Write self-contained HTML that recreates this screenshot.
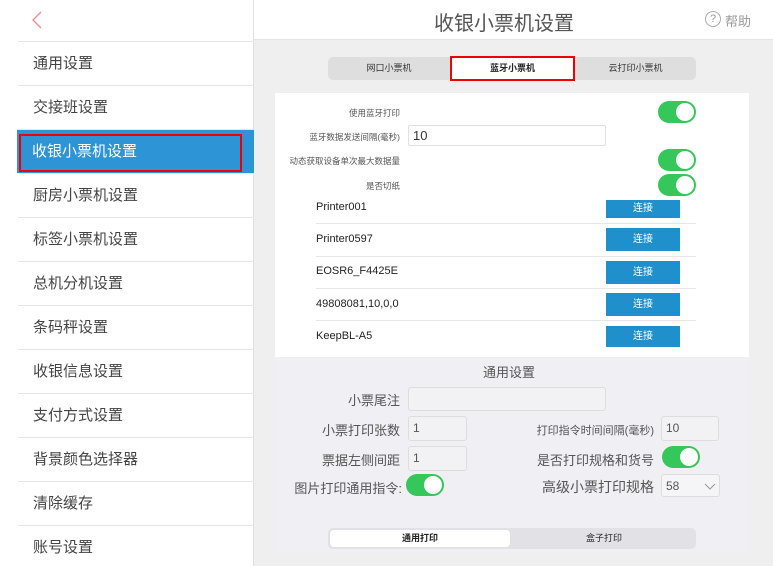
<!DOCTYPE html>
<html><head><meta charset="utf-8"><style>
*{margin:0;padding:0;box-sizing:border-box}
body{width:773px;height:566px;overflow:hidden;background:#fff;font-family:"Liberation Sans","Noto Sans CJK SC",sans-serif;position:relative;color:#333}
.a{position:absolute}
.side{left:0;top:0;width:254px;height:566px;background:#fff;border-right:1px solid #e0e0e0}
.item{position:absolute;left:18px;width:236px;height:44px;border-top:1px solid #e6e6e6;font-size:15px;color:#444;padding-left:15px;line-height:44px}
.sel{background:#2d94d6;color:#fff;left:17px;width:242px}
.main{left:254px;top:40px;width:519px;height:526px;background:#efefef}
.tog{position:absolute;width:38px;height:22px;border-radius:11px;background:#35c759}
.tog::after{content:"";position:absolute;right:2px;top:2px;width:18px;height:18px;border-radius:50%;background:#fff}
.lbl{position:absolute;font-size:8.5px;color:#555;text-align:right}
.inp{position:absolute;border:1px solid #e0e0e0;background:#fff;border-radius:2px}
.btn{position:absolute;left:606px;width:74px;height:23px;background:#1f90cc;color:#fff;font-size:10px;text-align:center;line-height:23px}
.pn{position:absolute;left:316px;font-size:11px;color:#222}
.ln{position:absolute;left:316px;width:380px;border-top:1px solid #e6e6e6}
.gl{position:absolute;font-size:13px;color:#555;text-align:right}
.gi{position:absolute;border:1px solid #ddd;border-radius:3px;background:#f2f2f5;font-size:12px;color:#555;padding-left:4px;line-height:22px}
</style></head><body>
<div class="a side">
<svg class="a" style="left:31px;top:11px" width="12" height="18"><path d="M10 1 L2 9 L10 17" stroke="#f08a8a" stroke-width="1.3" fill="none"/></svg>
<div class="item" style="top:41px">通用设置</div>
<div class="item" style="top:85px">交接班设置</div>
<div class="item sel" style="top:129px"><div class="a" style="left:2px;top:4px;width:223px;height:38px;border:2px solid #e00"></div><span style="position:relative">收银小票机设置</span></div>
<div class="item" style="top:173px">厨房小票机设置</div>
<div class="item" style="top:217px">标签小票机设置</div>
<div class="item" style="top:261px">总机分机设置</div>
<div class="item" style="top:305px">条码秤设置</div>
<div class="item" style="top:349px">收银信息设置</div>
<div class="item" style="top:393px">支付方式设置</div>
<div class="item" style="top:437px">背景颜色选择器</div>
<div class="item" style="top:481px">清除缓存</div>
<div class="item" style="top:525px">账号设置</div>
</div>
<div class="a" style="left:254px;top:0;width:519px;height:40px;border-bottom:1px solid #e5e5e5">
<div class="a" style="left:180px;top:7px;font-size:20px;color:#555">收银小票机设置</div>
<div class="a" style="left:451px;top:11px;width:16px;height:16px;border:1px solid #aaa;border-radius:50%;font-size:11px;color:#999;text-align:center;line-height:14px">?</div>
<div class="a" style="left:471px;top:11px;font-size:13px;color:#999">帮助</div>
</div>
<div class="a main"></div>
<div class="a" style="left:328px;top:57px;width:368px;height:23px;background:#dedede;border-radius:5px"></div>
<div class="a" style="left:328px;top:57px;width:122px;height:23px;font-size:9px;text-align:center;line-height:23px;color:#333">网口小票机</div>
<div class="a" style="left:450px;top:56px;width:125px;height:25px;border:2px solid #e00;background:#fff;font-size:9px;text-align:center;line-height:21px;color:#222;font-weight:bold">蓝牙小票机</div>
<div class="a" style="left:575px;top:57px;width:121px;height:23px;font-size:9px;text-align:center;line-height:23px;color:#333">云打印小票机</div>
<div class="a" style="left:275px;top:93px;width:474px;height:264px;background:#fff"></div>
<div class="lbl" style="left:280px;top:107px;width:120px">使用蓝牙打印</div>
<div class="tog" style="left:658px;top:101px"></div>
<div class="lbl" style="left:280px;top:131px;width:120px">蓝牙数据发送间隔(毫秒)</div>
<div class="inp" style="left:408px;top:125px;width:198px;height:21px;font-size:13px;padding-left:4px;line-height:19px">10</div>
<div class="lbl" style="left:270px;top:155px;width:130px">动态获取设备单次最大数据量</div>
<div class="tog" style="left:658px;top:149px"></div>
<div class="lbl" style="left:280px;top:180px;width:120px">是否切纸</div>
<div class="tog" style="left:658px;top:174px"></div>
<div class="pn" style="top:201px">Printer001</div>
<div class="btn" style="top:200px;height:18px;line-height:18px">连接</div>
<div class="ln" style="top:223px"></div>
<div class="pn" style="top:233px">Printer0597</div>
<div class="btn" style="top:228px">连接</div>
<div class="ln" style="top:256px"></div>
<div class="pn" style="top:265px">EOSR6_F4425E</div>
<div class="btn" style="top:261px">连接</div>
<div class="ln" style="top:288px"></div>
<div class="pn" style="top:298px">49808081,10,0,0</div>
<div class="btn" style="top:293px">连接</div>
<div class="ln" style="top:320px"></div>
<div class="pn" style="top:330px">KeepBL-A5</div>
<div class="btn" style="top:326px;height:21px;line-height:21px">连接</div>
<div class="a" style="left:275px;top:357px;width:474px;height:196px;background:#efeff4"></div>
<div class="a" style="left:483px;top:362px;font-size:13px;color:#555">通用设置</div>
<div class="gl" style="left:290px;top:390px;width:110px">小票尾注</div>
<div class="gi" style="left:408px;top:387px;width:198px;height:24px"></div>
<div class="gl" style="left:290px;top:420px;width:110px">小票打印张数</div>
<div class="gi" style="left:408px;top:416px;width:59px;height:25px">1</div>
<div class="gl" style="left:500px;top:422px;width:154px;font-size:11px">打印指令时间间隔(毫秒)</div>
<div class="gi" style="left:661px;top:416px;width:58px;height:25px">10</div>
<div class="gl" style="left:290px;top:450px;width:110px">票据左侧间距</div>
<div class="gi" style="left:408px;top:446px;width:59px;height:25px">1</div>
<div class="gl" style="left:500px;top:450px;width:154px">是否打印规格和货号</div>
<div class="tog" style="left:662px;top:446px"></div>
<div class="gl" style="left:280px;top:478px;width:122px">图片打印通用指令:</div>
<div class="tog" style="left:406px;top:474px"></div>
<div class="gl" style="left:500px;top:477px;width:154px;font-size:14px">高级小票打印规格</div>
<div class="gi" style="left:661px;top:474px;width:59px;height:23px;background:#f5f5f7">58<svg class="a" style="left:42px;top:8px" width="12" height="8"><path d="M1 1 L6 6 L11 1" stroke="#999" fill="none"/></svg></div>
<div class="a" style="left:328px;top:528px;width:368px;height:21px;background:#e2e2e6;border-radius:5px"></div>
<div class="a" style="left:330px;top:530px;width:180px;height:17px;background:#fff;border-radius:4px;font-size:9px;text-align:center;line-height:17px;color:#222;font-weight:bold">通用打印</div>
<div class="a" style="left:512px;top:530px;width:184px;height:17px;font-size:9px;text-align:center;line-height:17px;color:#222">盒子打印</div>
</body></html>
